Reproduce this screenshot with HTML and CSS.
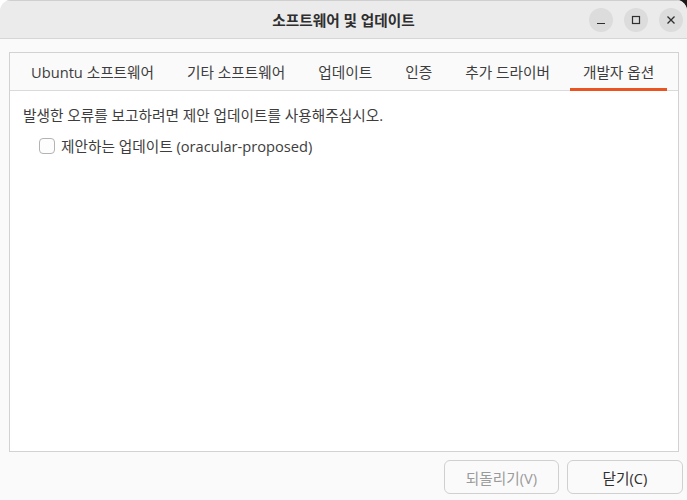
FILE: index.html
```html
<!DOCTYPE html>
<html lang="ko">
<head>
<meta charset="utf-8">
<title>소프트웨어 및 업데이트</title>
<link rel="stylesheet" href="styles.css">
</head>
<body>
<div class="backdrop"></div>
<div class="window">
  <header class="titlebar">
    <div class="title">소프트웨어 및 업데이트</div>
    <div class="controls">
      <button class="ctl" aria-label="최소화">
        <svg width="10" height="10" viewBox="0 0 10 10"><path d="M1 8.5h8" stroke="#2e2e2e" stroke-width="1.2" fill="none"/></svg>
      </button>
      <button class="ctl" aria-label="최대화">
        <svg width="10" height="10" viewBox="0 0 10 10"><rect x="1.5" y="1.5" width="7" height="7" stroke="#2e2e2e" stroke-width="1.2" fill="none"/></svg>
      </button>
      <button class="ctl" aria-label="닫기">
        <svg width="10" height="10" viewBox="0 0 10 10"><path d="M1.5 1.5l7 7M8.5 1.5l-7 7" stroke="#2e2e2e" stroke-width="1.3" fill="none"/></svg>
      </button>
    </div>
  </header>
  <main class="body">
    <section class="notebook">
      <nav class="tabs">
        <div class="tab">Ubuntu 소프트웨어</div>
        <div class="tab">기타 소프트웨어</div>
        <div class="tab">업데이트</div>
        <div class="tab">인증</div>
        <div class="tab">추가 드라이버</div>
        <div class="tab active">개발자 옵션</div>
      </nav>
      <div class="page">
        <p class="info">발생한 오류를 보고하려면 제안 업데이트를 사용해주십시오.</p>
        <label class="check"><span class="box"></span><span>제안하는 업데이트 (oracular-proposed)</span></label>
      </div>
    </section>
    <div class="actions">
      <button class="btn disabled">되돌리기(V)</button>
      <button class="btn">닫기(C)</button>
    </div>
  </main>
</div>
</body>
</html>
```
FILE: styles.css
```css
html, body {
  margin: 0;
  padding: 0;
}
body {
  width: 687px;
  height: 500px;
  overflow: hidden;
  background: #ffffff;
  font-family: "Open Sans", "Noto Sans CJK KR", sans-serif;
  font-size: 14.67px;
  color: #3d3d3d;
  position: relative;
}
.backdrop {
  position: absolute;
  top: 0;
  right: 0;
  width: 36px;
  height: 14px;
  background: #1a1a1a;
}
.window {
  position: relative;
  height: 500px;
  background: #fafafa;
  border-radius: 11px 11px 0 0;
  overflow: hidden;
  display: flex;
  flex-direction: column;
}
.titlebar {
  flex: none;
  background: #ebebeb;
  border-bottom: 1px solid #d6d6d6;
  border-top: 1px solid #cfcfcf;
  box-sizing: border-box;
  height: 39px;
  display: grid;
  grid-template-columns: 1fr auto 1fr;
  align-items: center;
}
.title {
  grid-column: 2;
  font-weight: bold;
  color: #2e2e2e;
  font-size: 14.67px;
}
.controls {
  grid-column: 3;
  justify-self: end;
  display: flex;
  gap: 11px;
  padding-right: 4px;
}
.ctl {
  width: 24px;
  height: 24px;
  border-radius: 50%;
  border: none;
  padding: 0;
  background: #dcdcdc;
  display: flex;
  align-items: center;
  justify-content: center;
}
.body {
  flex: 1;
  display: flex;
  flex-direction: column;
  padding: 13px 8px 6px 9px;
}
.notebook {
  height: 400px;
  box-sizing: border-box;
  border: 1px solid #d2d2d2;
  background: #ffffff;
  display: flex;
  flex-direction: column;
}
.tabs {
  height: 38px;
  box-sizing: border-box;
  border-bottom: 1px solid #dadada;
  background: #fafafa;
  display: flex;
  gap: 7px;
  padding-left: 8px;
}
.tab {
  padding: 0 13px;
  display: flex;
  align-items: center;
  white-space: nowrap;
  color: #3d3d3d;
  border-bottom: 3px solid transparent;
  padding-top: 2px;
  margin-bottom: -1px;
}
.tab.active {
  border-bottom-color: #e95420;
}
.page {
  padding: 13px 13px;
}
.info {
  margin: 0 0 9px 0;
  line-height: 22px;
}
.check {
  display: flex;
  align-items: center;
  gap: 6px;
  padding-left: 16px;
  line-height: 22px;
}
.box {
  width: 14px;
  height: 14px;
  border: 1px solid #b3b3b3;
  border-radius: 4px;
  background: #fdfdfd;
}
.actions {
  display: flex;
  justify-content: flex-end;
  gap: 8px;
  margin-top: 8px;
  margin-right: -4px;
}
.btn {
  width: 116px;
  height: 34px;
  border: 1px solid #d0d0d0;
  border-radius: 6px;
  background: #fafafa;
  font-family: inherit;
  font-size: 14.67px;
  color: #2e2e2e;
  padding: 0;
}
.btn.disabled {
  width: 115px;
  color: #9a9a9a;
}
```
